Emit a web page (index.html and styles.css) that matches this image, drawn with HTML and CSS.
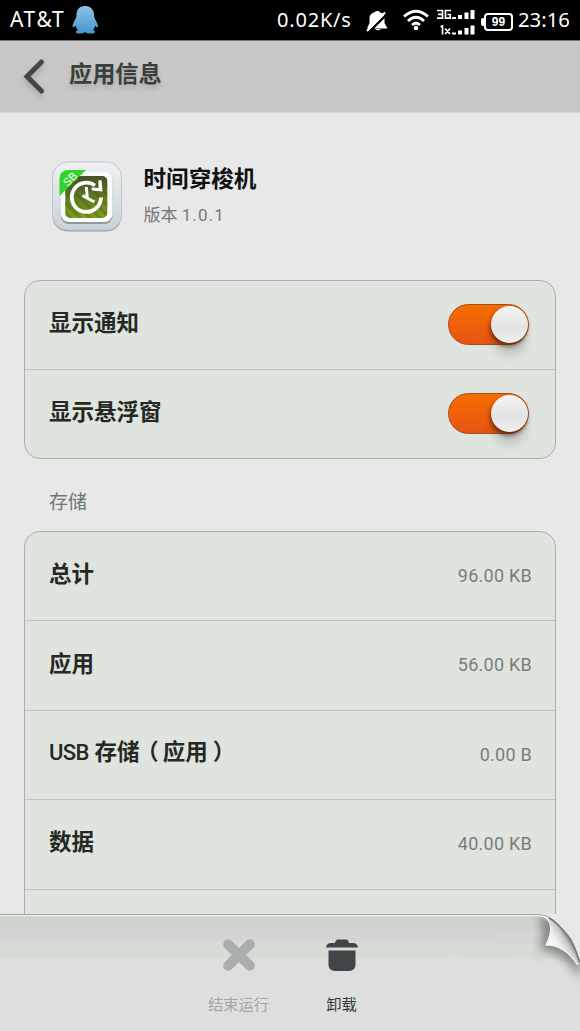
FILE: index.html
```html
<!DOCTYPE html>
<html lang="zh-CN">
<head>
<meta charset="utf-8">
<title>应用信息</title>
<link rel="stylesheet" href="styles.css">
</head>
<body>
<div class="status">
  <span class="carrier">AT&amp;T</span>
  <svg class="penguin" width="28" height="30" viewBox="0 0 28 30">
    <defs><linearGradient id="pg" x2="0" y2="1"><stop offset="0" stop-color="#8bc4e6"/><stop offset="1" stop-color="#4596cf"/></linearGradient></defs>
    <path fill="url(#pg)" d="M14 1C8 1 5.500 5 5.500 10C5.500 14 2 17 1.500 21C1.500 23 3 22.500 4.500 20.500C5 23 6 24 7 25C4 26 4 28.500 8 28.500C11 28.500 13 28 14 27C15 28 17 28.500 20 28.500C25 28.500 25 26 22 25C23 24 24 22.500 24 20.500C25.500 22.500 27 23 27 21C26.500 17 23 14 23 10C23 5 20 1 14 1Z"/>
  </svg>
  <span class="speed">0.02K/s</span>
  <svg class="bell" width="22" height="22" viewBox="0 0 22 22">
    <path fill="#fff" d="M11 1C12.500 1 13.500 1.500 13.500 2C17 3 18.500 5 18.500 8V13L21.500 18.500H1L3.500 13V8C3.500 5 5.500 3 9 2C9 1.500 10 1 11 1ZM9 19H15Q12 21.500 9 19Z"/>
    <path d="M2.500 22.500L21.500 3.500" stroke="#000" stroke-width="2.400"/>
    <path d="M1 21L19 2.500" stroke="#fff" stroke-width="2"/>
  </svg>
  <svg class="wifi" width="26" height="22" viewBox="0 0 26 22">
    <g fill="none" stroke="#fff" stroke-width="2.800"><path d="M1 7.500Q13 -3 25 7.500M5 12Q13 4.500 21 12M9 16Q13 12.500 17 16"/></g>
    <circle cx="13" cy="19" r="2.300" fill="#fff"/>
  </svg>
  <svg class="signal" width="40" height="28" viewBox="0 0 40 28">
    <g fill="none" stroke="#fff" stroke-width="1.700"><path d="M1 3.500H6.500V11.200H1M2 7.300H6.500M15 3.500H9.500V11.200H14.200V7.500H11.500M4.500 19.800L6.500 19V27.500M9 21.500L14 27M14 21.500L9 27"/></g>
    <path fill="#fff" d="M16 10h4v2h-4zM22 8h4v4h-4zM28.500 5.500h4V12h-4zM34.500 3h4v9h-4zM16 25.500h4v2h-4zM22 23.500h4v4h-4zM28.500 21h4v6.500h-4zM34.500 18.500h4v9h-4z"/>
  </svg>
  <span class="battery"><b>99</b></span>
  <span class="clock">23:16</span>
</div>
<header class="titlebar">
  <svg class="back" width="26" height="42" viewBox="0 0 26 42"><path d="M20.500 6L6 20.500L20.500 35" fill="none" stroke="#454746" stroke-width="5" stroke-linecap="round"/></svg>
  <h1>应用信息</h1>
</header>
<main>
  <section class="app">
    <svg class="appicon" width="76" height="78" viewBox="0 0 76 78">
      <defs>
        <linearGradient id="ic" x2="0" y2="1"><stop offset="0" stop-color="#eef1f3"/><stop offset="1" stop-color="#c9d2d6"/></linearGradient>
        <linearGradient id="gr" x2="0" y2="1"><stop offset="0" stop-color="#46512f"/><stop offset="1" stop-color="#7c9f1a"/></linearGradient>
        <pattern id="st" width="7" height="7" patternUnits="userSpaceOnUse" patternTransform="rotate(-45)"><path d="M1.500 0V7" stroke="#335a0d" stroke-opacity=".3" stroke-width="3"/></pattern>
      </defs>
      <rect x="3.500" y="4" width="69" height="68.500" rx="15" fill="#959ea1"/>
      <rect x="3.500" y="3" width="69" height="68" rx="15" fill="url(#ic)" stroke="#c1c7c9"/>
      <rect x="12" y="14" width="51.500" height="51" rx="8" fill="#8f9899"/>
      <rect x="12" y="13" width="51.500" height="50" rx="8" fill="#fafbfa"/>
      <rect x="16.300" y="17" width="42" height="42" rx="5" fill="url(#gr)"/>
      <rect x="16.300" y="17" width="42" height="42" rx="5" fill="url(#st)"/>
      <path d="M46 26.500A14.600 14.600 0 1 0 52 38.500" fill="none" stroke="#fff" stroke-width="3.800"/>
      <path d="M49.500 21.500L52.500 21L53.500 32.500L43 31.500L42.500 28.500L49.500 29Z" fill="#fff"/>
      <path d="M37.300 28L38.300 39M33.500 36.500L45.500 43" fill="none" stroke="#fff" stroke-width="3"/>
      <path d="M20 11H37L10.500 37V20Q10.500 11 20 11Z" fill="#2fd42c"/>
      <text class="ribbon" transform="translate(18.500 28) rotate(-45)">SB</text>
    </svg>
    <div class="appmeta">
      <h2>时间穿梭机</h2>
      <p>版本 <span>1.0.1</span></p>
    </div>
  </section>
  <section class="card">
    <div class="row"><b>显示通知</b><span class="switch"><i></i></span></div>
    <div class="row"><b>显示悬浮窗</b><span class="switch"><i></i></span></div>
  </section>
  <h3>存储</h3>
  <section class="card storage">
    <div class="row"><b>总计</b><span class="value">96.00 KB</span></div>
    <div class="row"><b>应用</b><span class="value">56.00 KB</span></div>
    <div class="row"><b><span class="usb">USB</span> 存储<span class="open">（</span>应用<span class="close">）</span></b><span class="value">0.00 B</span></div>
    <div class="row"><b>数据</b><span class="value">40.00 KB</span></div>
    <div class="row"></div>
  </section>
</main>
<footer>
  <svg class="sheet" width="580" height="117" viewBox="0 0 580 117">
    <defs>
      <clipPath id="page"><path d="M0 0H535C549 0 554 6 560 13C568 20 576 34 580 48V117H0Z"/></clipPath>
      <linearGradient id="curl" x1="550" y1="32" x2="568" y2="21" gradientUnits="userSpaceOnUse"><stop offset="0" stop-color="#fff"/><stop offset=".4" stop-color="#eeeeed"/><stop offset=".75" stop-color="#c9cac9"/><stop offset="1" stop-color="#7b7d7b"/></linearGradient>
      <filter id="soft" x="-50%" y="-50%" width="200%" height="200%"><feGaussianBlur stdDeviation="5"/></filter>
    </defs>
    <g clip-path="url(#page)">
      <rect width="580" height="117" fill="#dedede"/>
      <rect width="580" height="15" fill="#ced3cc"/>
      <rect y="15" width="580" height="12" fill="#d5d4d4"/>
      <path d="M0 27H495V18H580V52L553 44L538 48L524 42L506 44H462L451 39L446 44H0Z" fill="#d6dbd4"/>
      <path d="M495 18H545V29H495Z" fill="#d4d6d3"/>
      <path d="M538 3C545 12 542 24 540 36C555 36 570 46 580 66V0Z" fill="#4d524d" opacity=".6" filter="url(#soft)"/>
    </g>
    <path d="M0 .5H535C549 .5 554 6 560 13C568 20 576 34 579.500 48" fill="none" stroke="#a0a69f"/>
    <path d="M0 1.700H538" stroke="#eef1ed" stroke-width="1.200"/>
    <path d="M538 1C548 1.500 552 8 550.500 17C550 23 548 27 546 31C556 31 569 36 577.500 51L579.500 48C576 34 568 20 560 13C554 6 549 1.500 538 1Z" fill="url(#curl)"/>
    <path d="M538 1.700C547 2 551.500 8 550.500 17C550 23 548 27 546 31C556 31 569 36 577.500 51" fill="none" stroke="#f5f6f4" stroke-width="1.200"/>
    <path d="M549 4C554 6 568 20 572 28C576 36 577 40 579.500 48" fill="none" stroke="#747975" stroke-width="1.600"/>
  </svg>
  <div class="action disabled">
    <svg width="36" height="36" viewBox="0 0 36 36"><path d="M7.200 7.200L28.800 28.800M28.800 7.200L7.200 28.800" stroke="#a9adac" stroke-width="10" stroke-linecap="round"/></svg>
    <span>结束运行</span>
  </div>
  <div class="action">
    <svg width="36" height="36" viewBox="0 0 36 36"><path fill="#404547" d="M2 10.500Q2.500 6 7 6H11Q11.500 2.500 14 2.500H22Q24.500 2.500 25 6H29Q33.500 6 34 10.500ZM4.500 13.500H31.500V27.500Q31.500 34 25 34H11Q4.500 34 4.500 27.500Z"/></svg>
    <span>卸载</span>
  </div>
</footer>
</body>
</html>
```
FILE: styles.css
```css
* { box-sizing: border-box; margin: 0; padding: 0; }
body {
  width: 580px; height: 1031px; overflow: hidden;
  display: flex; flex-direction: column;
  background: #e8e8e8; color: #242923;
  font-family: Roboto, "Noto Sans CJK SC", sans-serif;
}
svg { display: block; flex: none; }
.status {
  flex: none; height: 41px; padding-left: 10px;
  display: flex; align-items: center;
  background: #000; border-bottom: 1px solid #777; color: #fff;
  font: 20px/40px "Noto Sans", sans-serif; white-space: nowrap;
}
.carrier { width: 61px; font-size: 21px; letter-spacing: 1.600px; line-height: 36px; margin-top: -2px; }
.speed { margin-left: 178px; width: 89px; line-height: 38px; letter-spacing: .8px; margin-top: -1px; }
.bell { margin-top: 1px; }
.wifi { margin-left: 15px; }
.signal { margin: 2px 0 0 7px; }
.battery {
  position: relative; width: 29px; height: 18px; margin: 3px 0 0 8px;
  border: 2px solid #fff; border-radius: 4px;
  font: 12px/14px "Liberation Sans", sans-serif; text-align: center;
}
.battery::before { content: ""; position: absolute; left: -5px; top: 3px; width: 4px; height: 8px; border-radius: 2px 0 0 2px; background: #fff; }
.battery b { display: block; }
.clock { margin: -2px 0 0 5px; line-height: 38px; font-size: 20.300px; }
.titlebar {
  flex: none; height: 72px; padding: 0 0 0 21px;
  display: flex; align-items: center;
  background: #c8c8c8; border-bottom: 1px solid #d8d8d8;
}
.back { filter: drop-shadow(0 4px 3px #8a918a99); }
h1 { margin: -6px 0 0 22px; font-size: 23.200px; line-height: 34px; color: #3b3f3b; text-shadow: 0 4px 4px #8a918a88; }
main { flex: 1; min-height: 0; overflow: hidden; padding: 0 24px; }
.app { display: flex; height: 167px; padding: 46px 0 0 25px; }
.appmeta { padding-left: 18.500px; }
h2 { padding-top: 4px; font-size: 22.600px; line-height: 34px; color: #111; }
.appmeta p { margin-top: 6px; font-size: 17px; line-height: 24px; color: #777; }
.appmeta p span { letter-spacing: 1.100px; }
.ribbon { font: 11px "Liberation Sans", sans-serif; fill: #fff; }
.card { border: 1px solid #a9b0aa; border-radius: 16px; background: #dfe4de; overflow: hidden; }
.row {
  height: 89.400px; padding: 0 23px 0 24px;
  display: flex; align-items: center; justify-content: space-between;
}
.row:first-child { height: 88px; }
.row + .row { border-top: 1px solid #bdc4bd; }
.row b { margin-top: -4px; font-size: 22.500px; line-height: 34px; white-space: nowrap; }
.row:first-child b { margin-top: -5px; }
.usb { font-weight: 500; font-size: 22px; letter-spacing: -.6px; }
.open { font-feature-settings: "halt"; margin: 0 4px 0 8px; }
.close { margin-left: 5px; }
h3 { height: 72px; padding: 26px 0 0 25px; font-size: 19px; line-height: 35px; font-weight: 400; color: #707570; }
.value { margin-top: -1.500px; font-size: 18px; letter-spacing: .25px; color: #797e79; }
.switch {
  width: 81px; height: 41px; margin: -1px 3px 0 0; padding: 1px 0;
  display: flex; justify-content: flex-end;
  border: 1.500px solid #a34d17; border-radius: 21px;
  background: linear-gradient(#f66d00, #e75413);
}
.switch i {
  width: 37px; height: 37px; border-radius: 50%;
  background: linear-gradient(#f5f5f3, #e2e2e2 60%, #f2f2f2);
  box-shadow: -1px 3px 4px #421b08bb, 0 14px 10px -2px #39403933;
}
footer { flex: none; position: relative; height: 117px; display: flex; justify-content: center; gap: 42px; padding-top: 23px; }
.sheet { position: absolute; left: 0; top: 0; }
.action { position: relative; width: 61px; display: flex; flex-direction: column; align-items: center; }
.action span { margin-top: 20px; font-size: 15.300px; line-height: 24px; white-space: nowrap; color: #343934; }
.disabled span { color: #a1a6a0; }
```
